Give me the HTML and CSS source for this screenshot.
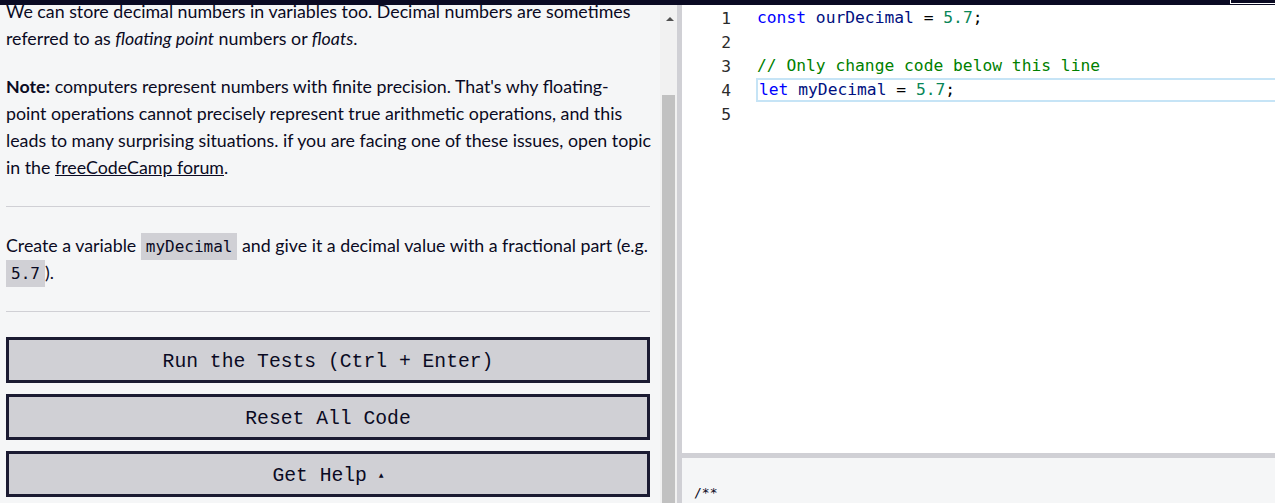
FILE: index.html
```html
<!DOCTYPE html>
<html>
<head>
<meta charset="utf-8">
<link rel="stylesheet" href="styles.css">
</head>
<body>
<div class="topbar"><div class="corner"></div></div>
<div class="main">
  <div class="left">
    <div class="desc">
      <p class="p1">We can store decimal numbers in variables too. Decimal numbers are sometimes referred to as <em>floating point</em> numbers or <em>floats</em>.</p>
      <p><strong>Note:</strong> computers represent numbers with finite precision. That's why floating-<br>point operations cannot precisely represent true arithmetic operations, and this leads to many surprising situations. if you are facing one of these issues, open topic in the <a href="#">freeCodeCamp forum</a>.</p>
    </div>
    <hr class="rule">
    <div class="instr">
      <p>Create a variable <code>myDecimal</code> and give it a decimal value with a fractional part (e.g. <code>5.7</code>).</p>
    </div>
    <hr class="rule">
    <div class="buttons">
      <button class="btn">Run the Tests (Ctrl + Enter)</button>
      <button class="btn">Reset All Code</button>
      <button class="btn">Get Help <span class="caret">▲</span></button>
    </div>
  </div>
  <div class="scrollbar">
    <div class="arrow"></div>
    <div class="thumb"></div>
  </div>
  <div class="vdivider"></div>
  <div class="right">
    <div class="editor">
      <div class="line"><span class="ln">1</span><span class="code"><span class="kw">const</span> <span class="id">ourDecimal</span> = <span class="num">5.7</span>;</span></div>
      <div class="line"><span class="ln">2</span><span class="code"></span></div>
      <div class="line"><span class="ln">3</span><span class="code"><span class="cm">// Only change code below this line</span></span></div>
      <div class="line current"><span class="ln">4</span><span class="code"><span class="kw">let</span> <span class="id">myDecimal</span> = <span class="num">5.7</span>;</span></div>
      <div class="line"><span class="ln">5</span><span class="code"></span></div>
    </div>
    <div class="hdivider"></div>
    <div class="console">/**</div>
  </div>
</div>
</body>
</html>
```
FILE: styles.css
```css
* { box-sizing: border-box; }
html, body { margin: 0; padding: 0; }
body {
  width: 1275px;
  height: 503px;
  overflow: hidden;
  display: flex;
  flex-direction: column;
  background: #f5f6f7;
  color: #0a0a23;
  font-family: Lato, "Noto Sans", sans-serif;
}
.topbar {
  height: 5px;
  background: #0a0a23;
  display: flex;
  justify-content: flex-end;
  position: relative;
  z-index: 2;
  flex: none;
}
.corner {
  width: 45px;
  height: 5px;
  border-left: 1px solid #ffffff;
  border-bottom: 1px solid #ffffff;
  margin-top: -1px;
}
.main {
  flex: 1;
  display: flex;
  min-height: 0;
}
.left {
  width: 660px;
  flex: none;
  background: #f5f6f7;
  padding: 0 10px 0 6px;
  overflow: hidden;
}
.desc {
  margin-top: -7px;
  margin-right: -4px;
}
.instr {
  margin-top: 25px;
  margin-right: -4px;
}
p {
  margin: 0;
  font-size: 17.8px;
  line-height: 27px;
}
.desc p.p1 { margin-bottom: 21px; }
em { font-style: italic; }
strong { font-weight: 700; }
a { color: #0a0a23; text-decoration: underline; }
.rule {
  border: none;
  border-top: 1px solid #d0d0d5;
  margin: 25px 0 0 0;
  height: 0;
}
code {
  font-family: "DejaVu Sans Mono", "Liberation Mono", monospace;
  font-size: 16px;
  line-height: 1;
  background: #d0d0d5;
  padding: 4px 5px;
  color: #0a0a23;
}
.buttons {
  margin-top: 25px;
  display: flex;
  flex-direction: column;
  gap: 11px;
}
.btn {
  height: 46px;
  width: 100%;
  background: #d0d0d5;
  border: 3px solid #1b1b32;
  color: #0a0a23;
  font-family: "Liberation Mono", "DejaVu Sans Mono", monospace;
  font-size: 19.7px;
  padding: 3px 0 0 0;
  margin: 0;
  text-align: center;
}
.caret {
  font-size: 8px;
  vertical-align: 3px;
}
.scrollbar {
  width: 17px;
  flex: none;
  background: #f1f1f1;
  padding-left: 2px;
  display: flex;
  flex-direction: column;
}
.arrow {
  width: 0;
  height: 0;
  margin: 12px 0 0 4px;
  border-left: 4px solid transparent;
  border-right: 4px solid transparent;
  border-bottom: 4px solid #505050;
}
.thumb {
  margin-top: 74px;
  width: 13px;
  flex: 1;
  background: #c1c1c1;
}
.vdivider {
  width: 5px;
  flex: none;
  background: #d0d0d5;
}
.right {
  flex: 1;
  display: flex;
  flex-direction: column;
  min-width: 0;
}
.editor {
  flex: 1;
  background: #ffffff;
  padding-top: 1px;
  font-family: "DejaVu Sans Mono", "Liberation Mono", monospace;
  font-size: 16.3px;
}
.line {
  height: 24px;
  display: flex;
  align-items: center;
}
.ln {
  width: 49px;
  text-align: right;
  color: #2b2b2b;
  flex: none;
}
.code {
  margin-left: 26px;
  flex: 1;
  height: 24px;
  line-height: 24px;
  white-space: pre;
  color: #000000;
}
.current .code {
  border: 2px solid #c6e4f6;
  border-right: none;
  line-height: 20px;
  margin-left: 25px;
  padding-left: 1px;
}
.kw { color: #0000ff; }
.id { color: #001080; }
.num { color: #098658; }
.cm { color: #008000; }
.hdivider {
  height: 5px;
  flex: none;
  background: #d0d0d5;
}
.console {
  height: 45px;
  flex: none;
  background: #f5f6f7;
  padding: 27px 0 0 12px;
  font-family: "DejaVu Sans Mono", monospace;
  font-size: 13px;
  color: #0a0a23;
}
```
